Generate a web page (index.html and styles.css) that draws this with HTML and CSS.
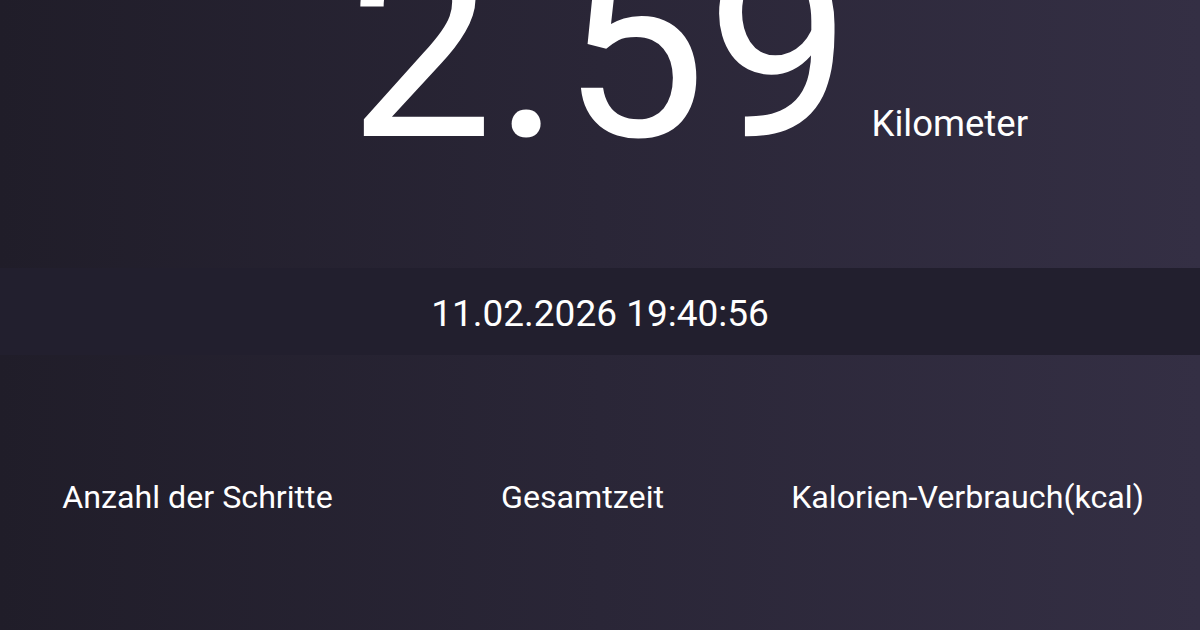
FILE: index.html
```html
<!DOCTYPE html>
<html lang="de">
<head>
  <meta charset="UTF-8">
  <meta name="viewport" content="width=device-width, initial-scale=1.0">
  <title>Laufen</title>
  <link rel="stylesheet" href="styles.css">
</head>
<body>
  <div class="page">
    <div class="hero">
      <span class="hero-value">2.59</span>
      <span class="hero-unit">Kilometer</span>
    </div>

    <div class="band">
      <span class="band-time">11.02.2026 19:40:56</span>
    </div>

    <ul class="stats">
      <li>Anzahl der Schritte</li>
      <li>Gesamtzeit</li>
      <li>Kalorien-Verbrauch(kcal)</li>
    </ul>
  </div>
</body>
</html>
```

FILE: styles.css
```css
body,ul,li{margin:0;padding:0}
ul{list-style:none}
body{
  font-family: Roboto, "Liberation Sans", sans-serif;
  color: #fff;
  background: linear-gradient(90deg, #201d29 0%, #2a2637 50%, #342f44 100%);
  height: 630px;
  overflow: hidden;
}
.page {
  width: 1200px;
  height: 630px;
}
.hero {
  display: grid;
  grid-template-columns: 1fr auto 1fr;
  align-items: baseline;
  margin-top: -81px;
}
.hero-value {
  grid-column: 2;
  font-size: 258px;
  font-weight: 400;
  line-height: 1;
}
.hero-unit {
  grid-column: 3;
  font-size: 36.5px;
  padding-left: 20px;
}
.band {
  margin-top: 91px;
  height: 87px;
  background: #221f2e;
  display: flex;
  align-items: center;
  justify-content: center;
}
.band-time {
  font-size: 37px;
  padding-top: 4px;
}
.stats {
  display: grid;
  grid-template-columns: repeat(3, 385px);
  padding-left: 5px;
  margin-top: 123px;
  font-size: 32.2px;
  line-height: 1.2;
}
.stats li {
  text-align: center;
  white-space: nowrap;
}
```
